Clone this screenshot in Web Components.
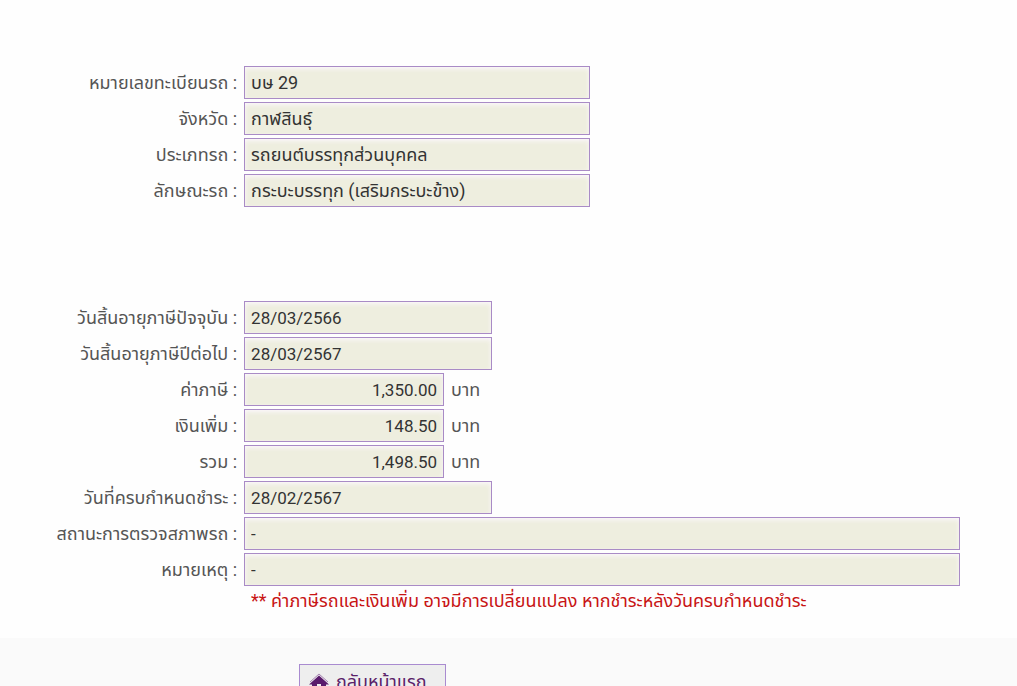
<!DOCTYPE html>
<html lang="th">
<head>
<meta charset="utf-8">
<meta name="viewport" content="width=device-width, initial-scale=1">
<title>ภาษีรถ</title>
<style>
  body {
    margin: 0;
    background: #fefefe;
    color: #555;
    font-family: Roboto, "Noto Sans Thai", "Noto Sans", sans-serif;
    font-size: 18px;
    line-height: 24px;
  }
</style>
</head>
<body>
<tax-page>
  <field-group>
    <tax-field label="หมายเลขทะเบียนรถ" value="บษ 29" size="large"></tax-field>
    <tax-field label="จังหวัด" value="กาฬสินธุ์" size="large"></tax-field>
    <tax-field label="ประเภทรถ" value="รถยนต์บรรทุกส่วนบุคคล" size="large"></tax-field>
    <tax-field label="ลักษณะรถ" value="กระบะบรรทุก (เสริมกระบะข้าง)" size="large"></tax-field>
  </field-group>
  <field-group>
    <tax-field label="วันสิ้นอายุภาษีปัจจุบัน" value="28/03/2566" size="medium"></tax-field>
    <tax-field label="วันสิ้นอายุภาษีปีต่อไป" value="28/03/2567" size="medium"></tax-field>
    <tax-field label="ค่าภาษี" value="1,350.00" size="small">บาท</tax-field>
    <tax-field label="เงินเพิ่ม" value="148.50" size="small">บาท</tax-field>
    <tax-field label="รวม" value="1,498.50" size="small">บาท</tax-field>
    <tax-field label="วันที่ครบกำหนดชำระ" value="28/02/2567" size="medium"></tax-field>
    <tax-field label="สถานะการตรวจสภาพรถ" value="-" size="full"></tax-field>
    <tax-field label="หมายเหตุ" value="-" size="full"></tax-field>
    <tax-note slot="note">** ค่าภาษีรถและเงินเพิ่ม อาจมีการเปลี่ยนแปลง หากชำระหลังวันครบกำหนดชำระ</tax-note>
  </field-group>
  <home-button slot="footer">กลับหน้าแรก</home-button>
</tax-page>

<script>
class TaxPage extends HTMLElement {
  constructor() {
    super();
    this.root = this.attachShadow({ mode: 'open' });
    this.root.innerHTML = `
      <style>
        :host {
          display: block;
        }

        main {
          display: flex;
          flex-direction: column;
          gap: 94px;
          padding: 66px 0 25px;
        }

        footer {
          display: flex;
          padding: 26px 0 26px 299px;
          background: #fafafa;
        }
      </style>
      <main><slot></slot></main>
      <footer><slot name="footer"></slot></footer>
    `;
  }
}

class FieldGroup extends HTMLElement {
  constructor() {
    super();
    this.root = this.attachShadow({ mode: 'open' });
    this.root.innerHTML = `
      <style>
        :host {
          display: flex;
          flex-direction: column;
          gap: 3px;
        }
      </style>
      <slot></slot>
      <slot name="note"></slot>
    `;
  }
}

class TaxField extends HTMLElement {
  constructor() {
    super();
    this.root = this.attachShadow({ mode: 'open' });
    this.renderHTML();
  }

  renderHTML() {
    this.root.innerHTML = `
      <style>
        :host {
          display: grid;
          grid-template-columns: 24% 1fr;
          align-items: center;
        }

        label {
          padding: 1px 7px 0 0;
          text-align: right;
        }

        .control {
          display: flex;
          align-items: center;
          gap: 7px;
          padding-right: 57px;
        }

        input {
          box-sizing: border-box;
          min-width: 0;
          height: 33px;
          padding: 0 6px;
          border: 1px solid #a98bc6;
          border-radius: 0;
          outline: 0;
          background: #eeeedf;
          box-shadow: inset 0 2px 4px #fbf7fb;
          color: #333;
          font: inherit;
          font-size: 17px;
        }

        .large {
          width: 346px;
          padding-top: 2px;
          font-size: 18px;
        }

        .medium { width: 248px; }
        .small { width: 200px; text-align: right; }
        .full { width: 100%; }
      </style>
      <label for="field"></label>
      <div class="control">
        <input id="field" type="text" readonly>
        <slot></slot>
      </div>
    `;
    const input = this.root.querySelector('input');
    this.root.querySelector('label').textContent = `${this.getAttribute('label')} :`;
    input.value = this.getAttribute('value');
    input.className = this.getAttribute('size');
  }
}

class TaxNote extends HTMLElement {
  constructor() {
    super();
    this.root = this.attachShadow({ mode: 'open' });
    this.root.innerHTML = `
      <style>
        :host {
          display: block;
          margin-left: 24%;
          padding-left: 7px;
          color: #c81414;
        }
      </style>
      <slot></slot>
    `;
  }
}

class HomeButton extends HTMLElement {
  constructor() {
    super();
    this.root = this.attachShadow({ mode: 'open' });
    this.root.innerHTML = `
      <style>
        :host {
          display: block;
        }

        button {
          display: flex;
          align-items: center;
          gap: 7px;
          height: 36px;
          padding: 0 18px 0 9px;
          border: 1px solid #a98bd0;
          background: #eee;
          color: #5a2169;
          font: inherit;
        }
      </style>
      <button type="button">
        <svg width="20" height="18" viewBox="0 0 20 18" aria-hidden="true">
          <path d="M1 9 10 1l9 8" fill="none" stroke="#a27fae" stroke-width="1"/>
          <path d="M0 11.500 10 2.500l10 9h-3V17h-5v-6H8v6H3v-5.500z" fill="#5a1a6c"/>
        </svg>
        <slot></slot>
      </button>
    `;
  }
}

customElements.define('tax-page', TaxPage);
customElements.define('field-group', FieldGroup);
customElements.define('tax-field', TaxField);
customElements.define('tax-note', TaxNote);
customElements.define('home-button', HomeButton);
</script>
</body>
</html>
